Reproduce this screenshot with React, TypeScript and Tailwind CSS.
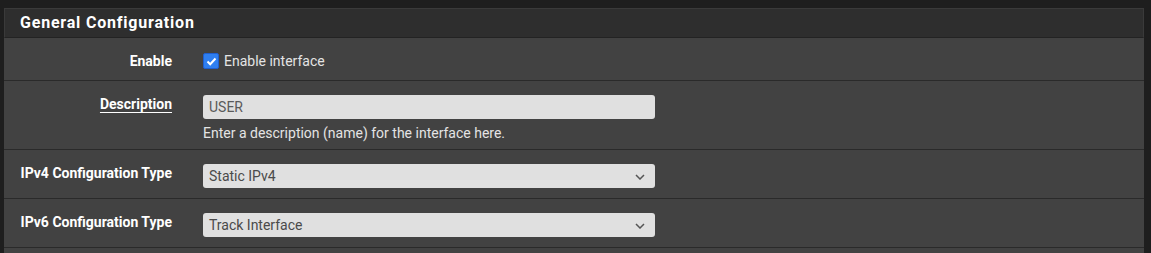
import React from "react";

const font = { fontFamily: "Roboto, 'Liberation Sans', sans-serif" };

function Chevron() {
  return (
    <svg width="10" height="6" viewBox="0 0 10 6" className="absolute right-[10px] top-[10px]">
      <path d="M1 1 L5 5 L9 1" fill="none" stroke="#555" strokeWidth="1.5" />
    </svg>
  );
}

function Select({ value }: { value: string }) {
  return (
    <div className="relative w-[452px] h-[24px] rounded-[3px] bg-[#e0e0e0] text-[14px] leading-[24px] text-[#4a4a4a] pl-[6px]">
      {value}
      <Chevron />
    </div>
  );
}

export default function App() {
  return (
    <div style={font} className="w-[1151px] h-[253px] bg-[#1e1e1e] pl-[4px] pt-[8px] overflow-hidden">
      <div className="w-[1140px]">
        <div className="h-[30px] bg-[#2e2e2e] border-t border-r border-l border-[#3a3a3a] border-b-[#232323] border-b pl-[15px] flex items-center">
          <span className="text-white font-bold text-[16px] tracking-[0.8px]">General Configuration</span>
        </div>
        <div className="h-[43px] bg-[#424242] border-b border-[#2a2a2a] flex items-start">
          <div className="w-[168px] pt-[13px] leading-[20px] text-right text-white font-bold text-[14px]">Enable</div>
          <div className="ml-[31px] pt-[13px] flex items-center h-[33px]">
            <div className="w-[16px] h-[16px] rounded-[2px] bg-[#2f7ff0] border border-[#1f5fd0] flex items-center justify-center">
              <svg width="11" height="9" viewBox="0 0 11 9">
                <path d="M1.5 4.5 L4.2 7.2 L9.5 1.5" fill="none" stroke="white" strokeWidth="2" />
              </svg>
            </div>
            <span className="ml-[5px] text-[14px] leading-[20px] text-[#e4e4e4]">Enable interface</span>
          </div>
        </div>
        <div className="h-[69px] bg-[#424242] border-b border-[#2a2a2a] flex items-start">
          <div className="w-[168px] text-right pt-[13px] leading-[20px]">
            <span className="text-white font-bold text-[14px] underline underline-offset-[3px]">Description</span>
          </div>
          <div className="ml-[31px] pt-[14px]">
            <div className="w-[452px] h-[24px] rounded-[3px] bg-[#e0e0e0] text-[14px] leading-[24px] text-[#5a5a5a] pl-[6px]">USER</div>
            <div className="mt-[4px] text-[14px] leading-[20px] text-[#e4e4e4]">Enter a description (name) for the interface here.</div>
          </div>
        </div>
        <div className="h-[49px] bg-[#424242] border-b border-[#2a2a2a] flex items-start">
          <div className="w-[168px] pt-[13px] leading-[20px] text-right text-white font-bold text-[14px]">IPv4 Configuration Type</div>
          <div className="ml-[31px] pt-[14px]">
            <Select value="Static IPv4" />
          </div>
        </div>
        <div className="h-[49px] bg-[#424242] border-b border-[#2a2a2a] flex items-start">
          <div className="w-[168px] pt-[13px] leading-[20px] text-right text-white font-bold text-[14px]">IPv6 Configuration Type</div>
          <div className="ml-[31px] pt-[14px]">
            <Select value="Track Interface" />
          </div>
        </div>
        <div className="h-[20px] bg-[#424242]"></div>
      </div>
    </div>
  );
}
